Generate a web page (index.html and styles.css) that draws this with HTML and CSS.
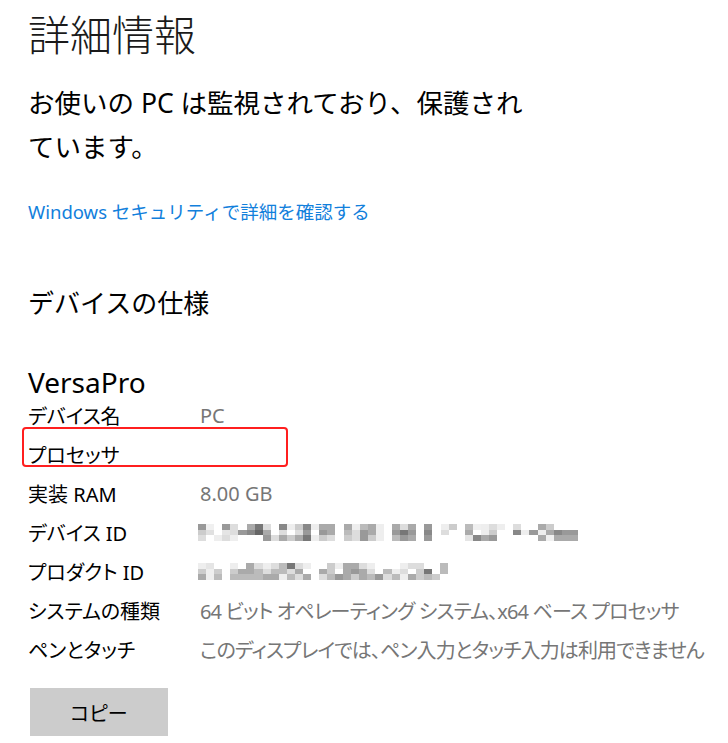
FILE: index.html
```html
<!DOCTYPE html>
<html lang="ja">
<head>
<meta charset="utf-8">
<title>詳細情報</title>
<link rel="stylesheet" href="styles.css">
</head>
<body>
<main class="page">
  <h1 class="title">詳細情報</h1>
  <p class="status">お使いの PC は監視されており、保護され<br>ています。</p>
  <a class="link" href="#">Windows セキュリティで詳細を確認する</a>

  <h2 class="section">デバイスの仕様</h2>

  <div class="model">VersaPro</div>
  <div class="specs">
    <div class="row"><span class="label">デバイス名</span><span class="value">PC</span></div>
    <div class="row marked"><span class="label">プロセッサ</span><span class="value"></span><span class="mark"></span></div>
    <div class="row"><span class="label">実装 RAM</span><span class="value">8.00 GB</span></div>
    <div class="row"><span class="label">デバイス ID</span>
      <svg class="blur blur-id" viewBox="0 0 47 3" preserveAspectRatio="none" aria-label="非表示の ID">
        <rect x="0" y="0" width="1" height="1" fill="#999"/><rect x="1" y="0" width="1" height="1" fill="#f0f0f0"/><rect x="3" y="0" width="1" height="1" fill="#999"/><rect x="4" y="0" width="1" height="1" fill="#ddd"/><rect x="6" y="0" width="1" height="1" fill="#aaa"/><rect x="7" y="0" width="1" height="1" fill="#777"/><rect x="8" y="0" width="1" height="1" fill="#ddd"/><rect x="10" y="0" width="1" height="1" fill="#888"/><rect x="11" y="0" width="1" height="1" fill="#eee"/><rect x="12" y="0" width="1" height="1" fill="#ccc"/><rect x="13" y="0" width="1" height="1" fill="#888"/><rect x="14" y="0" width="1" height="1" fill="#eee"/><rect x="15" y="0" width="1" height="1" fill="#aaa"/><rect x="16" y="0" width="1" height="1" fill="#aaa"/><rect x="18" y="0" width="1" height="1" fill="#aaa"/><rect x="19" y="0" width="1" height="1" fill="#eee"/><rect x="20" y="0" width="1" height="1" fill="#bbb"/><rect x="21" y="0" width="1" height="1" fill="#aaa"/><rect x="22" y="0" width="1" height="1" fill="#eee"/><rect x="24" y="0" width="1" height="1" fill="#aaa"/><rect x="25" y="0" width="1" height="1" fill="#ddd"/><rect x="26" y="0" width="1" height="1" fill="#aaa"/><rect x="28" y="0" width="1" height="1" fill="#999"/><rect x="30" y="0" width="1" height="1" fill="#eee"/><rect x="31" y="0" width="1" height="1" fill="#ccc"/><rect x="33" y="0" width="1" height="1" fill="#bbb"/><rect x="34" y="0" width="1" height="1" fill="#f0f0f0"/><rect x="35" y="0" width="1" height="1" fill="#eee"/><rect x="36" y="0" width="1" height="1" fill="#ddd"/><rect x="37" y="0" width="1" height="1" fill="#eee"/><rect x="39" y="0" width="1" height="1" fill="#ddd"/><rect x="42" y="0" width="1" height="1" fill="#aaa"/><rect x="43" y="0" width="1" height="1" fill="#ccc"/>
        <rect x="0" y="1" width="1" height="1" fill="#ccc"/><rect x="1" y="1" width="1" height="1" fill="#e0e0e0"/><rect x="3" y="1" width="1" height="1" fill="#e5e5e5"/><rect x="4" y="1" width="1" height="1" fill="#ddd"/><rect x="5" y="1" width="1" height="1" fill="#999"/><rect x="6" y="1" width="1" height="1" fill="#888"/><rect x="7" y="1" width="1" height="1" fill="#666"/><rect x="8" y="1" width="1" height="1" fill="#aaa"/><rect x="10" y="1" width="1" height="1" fill="#ddd"/><rect x="12" y="1" width="1" height="1" fill="#ddd"/><rect x="13" y="1" width="1" height="1" fill="#999"/><rect x="15" y="1" width="1" height="1" fill="#999"/><rect x="16" y="1" width="1" height="1" fill="#aaa"/><rect x="18" y="1" width="1" height="1" fill="#bbb"/><rect x="19" y="1" width="1" height="1" fill="#ddd"/><rect x="20" y="1" width="1" height="1" fill="#999"/><rect x="21" y="1" width="1" height="1" fill="#aaa"/><rect x="22" y="1" width="1" height="1" fill="#eee"/><rect x="24" y="1" width="1" height="1" fill="#999"/><rect x="25" y="1" width="1" height="1" fill="#777"/><rect x="26" y="1" width="1" height="1" fill="#999"/><rect x="28" y="1" width="1" height="1" fill="#888"/><rect x="30" y="1" width="1" height="1" fill="#ddd"/><rect x="33" y="1" width="1" height="1" fill="#aaa"/><rect x="35" y="1" width="1" height="1" fill="#eee"/><rect x="36" y="1" width="1" height="1" fill="#ccc"/><rect x="39" y="1" width="1" height="1" fill="#888"/><rect x="40" y="1" width="1" height="1" fill="#eee"/><rect x="41" y="1" width="1" height="1" fill="#999"/><rect x="42" y="1" width="1" height="1" fill="#eee"/><rect x="43" y="1" width="1" height="1" fill="#aaa"/><rect x="44" y="1" width="1" height="1" fill="#888"/><rect x="45" y="1" width="1" height="1" fill="#999"/><rect x="46" y="1" width="1" height="1" fill="#999"/>
        <rect x="0" y="2" width="1" height="1" fill="#ddd"/><rect x="2" y="2" width="1" height="1" fill="#eee"/><rect x="3" y="2" width="1" height="1" fill="#ddd"/><rect x="4" y="2" width="1" height="1" fill="#eee"/><rect x="8" y="2" width="1" height="1" fill="#999"/><rect x="9" y="2" width="1" height="1" fill="#ddd"/><rect x="10" y="2" width="1" height="1" fill="#aaa"/><rect x="11" y="2" width="1" height="1" fill="#ccc"/><rect x="12" y="2" width="1" height="1" fill="#aaa"/><rect x="13" y="2" width="1" height="1" fill="#777"/><rect x="14" y="2" width="1" height="1" fill="#eee"/><rect x="15" y="2" width="1" height="1" fill="#ccc"/><rect x="16" y="2" width="1" height="1" fill="#ddd"/><rect x="18" y="2" width="1" height="1" fill="#ccc"/><rect x="19" y="2" width="1" height="1" fill="#ddd"/><rect x="20" y="2" width="1" height="1" fill="#999"/><rect x="21" y="2" width="1" height="1" fill="#ccc"/><rect x="22" y="2" width="1" height="1" fill="#eee"/><rect x="24" y="2" width="1" height="1" fill="#bbb"/><rect x="25" y="2" width="1" height="1" fill="#999"/><rect x="26" y="2" width="1" height="1" fill="#aaa"/><rect x="28" y="2" width="1" height="1" fill="#999"/><rect x="33" y="2" width="1" height="1" fill="#e5e5e5"/><rect x="34" y="2" width="1" height="1" fill="#888"/><rect x="35" y="2" width="1" height="1" fill="#aaa"/><rect x="36" y="2" width="1" height="1" fill="#999"/><rect x="42" y="2" width="1" height="1" fill="#aaa"/><rect x="43" y="2" width="1" height="1" fill="#f0f0f0"/><rect x="44" y="2" width="1" height="1" fill="#aaa"/><rect x="45" y="2" width="1" height="1" fill="#aaa"/><rect x="46" y="2" width="1" height="1" fill="#aaa"/>
      </svg>
    </div>
    <div class="row"><span class="label">プロダクト ID</span>
      <svg class="blur blur-product" viewBox="0 0 32 3" preserveAspectRatio="none" aria-label="非表示の ID">
        <rect x="0" y="0" width="1" height="1" fill="#eee"/><rect x="1" y="0" width="1" height="1" fill="#e5e5e5"/><rect x="4" y="0" width="1" height="1" fill="#eee"/><rect x="6" y="0" width="1" height="1" fill="#aaa"/><rect x="7" y="0" width="1" height="1" fill="#ddd"/><rect x="8" y="0" width="1" height="1" fill="#eee"/><rect x="9" y="0" width="1" height="1" fill="#ddd"/><rect x="10" y="0" width="1" height="1" fill="#bbb"/><rect x="11" y="0" width="1" height="1" fill="#777"/><rect x="12" y="0" width="1" height="1" fill="#ddd"/><rect x="13" y="0" width="1" height="1" fill="#eee"/><rect x="16" y="0" width="1" height="1" fill="#ccc"/><rect x="17" y="0" width="1" height="1" fill="#eee"/><rect x="18" y="0" width="1" height="1" fill="#aaa"/><rect x="19" y="0" width="1" height="1" fill="#aaa"/><rect x="20" y="0" width="1" height="1" fill="#ddd"/><rect x="21" y="0" width="1" height="1" fill="#eee"/><rect x="25" y="0" width="1" height="1" fill="#eee"/><rect x="26" y="0" width="1" height="1" fill="#ddd"/><rect x="27" y="0" width="1" height="1" fill="#ddd"/><rect x="30" y="0" width="1" height="1" fill="#bbb"/>
        <rect x="0" y="1" width="1" height="1" fill="#ccc"/><rect x="1" y="1" width="1" height="1" fill="#eee"/><rect x="2" y="1" width="1" height="1" fill="#ccc"/><rect x="4" y="1" width="1" height="1" fill="#ccc"/><rect x="5" y="1" width="1" height="1" fill="#aaa"/><rect x="6" y="1" width="1" height="1" fill="#aaa"/><rect x="7" y="1" width="1" height="1" fill="#bbb"/><rect x="8" y="1" width="1" height="1" fill="#ddd"/><rect x="9" y="1" width="1" height="1" fill="#bbb"/><rect x="10" y="1" width="1" height="1" fill="#bbb"/><rect x="11" y="1" width="1" height="1" fill="#ddd"/><rect x="12" y="1" width="1" height="1" fill="#aaa"/><rect x="15" y="1" width="1" height="1" fill="#aaa"/><rect x="16" y="1" width="1" height="1" fill="#ccc"/><rect x="18" y="1" width="1" height="1" fill="#aaa"/><rect x="19" y="1" width="1" height="1" fill="#999"/><rect x="20" y="1" width="1" height="1" fill="#aaa"/><rect x="21" y="1" width="1" height="1" fill="#ddd"/><rect x="23" y="1" width="1" height="1" fill="#bbb"/><rect x="24" y="1" width="1" height="1" fill="#eee"/><rect x="25" y="1" width="1" height="1" fill="#ddd"/><rect x="27" y="1" width="1" height="1" fill="#ccc"/><rect x="28" y="1" width="1" height="1" fill="#777"/><rect x="30" y="1" width="1" height="1" fill="#bbb"/>
        <rect x="0" y="2" width="1" height="1" fill="#aaa"/><rect x="1" y="2" width="1" height="1" fill="#eee"/><rect x="2" y="2" width="1" height="1" fill="#bbb"/><rect x="4" y="2" width="1" height="1" fill="#bbb"/><rect x="5" y="2" width="1" height="1" fill="#bbb"/><rect x="6" y="2" width="1" height="1" fill="#bbb"/><rect x="7" y="2" width="1" height="1" fill="#bbb"/><rect x="8" y="2" width="1" height="1" fill="#aaa"/><rect x="9" y="2" width="1" height="1" fill="#aaa"/><rect x="10" y="2" width="1" height="1" fill="#eee"/><rect x="11" y="2" width="1" height="1" fill="#bbb"/><rect x="12" y="2" width="1" height="1" fill="#ddd"/><rect x="13" y="2" width="1" height="1" fill="#aaa"/><rect x="15" y="2" width="1" height="1" fill="#ddd"/><rect x="16" y="2" width="1" height="1" fill="#bbb"/><rect x="17" y="2" width="1" height="1" fill="#999"/><rect x="18" y="2" width="1" height="1" fill="#aaa"/><rect x="19" y="2" width="1" height="1" fill="#ccc"/><rect x="20" y="2" width="1" height="1" fill="#aaa"/><rect x="21" y="2" width="1" height="1" fill="#bbb"/><rect x="22" y="2" width="1" height="1" fill="#999"/><rect x="23" y="2" width="1" height="1" fill="#ddd"/><rect x="24" y="2" width="1" height="1" fill="#bbb"/><rect x="25" y="2" width="1" height="1" fill="#eee"/><rect x="26" y="2" width="1" height="1" fill="#aaa"/><rect x="27" y="2" width="1" height="1" fill="#ccc"/><rect x="28" y="2" width="1" height="1" fill="#bbb"/><rect x="29" y="2" width="1" height="1" fill="#ccc"/>
      </svg>
    </div>
    <div class="row"><span class="label">システムの種類</span><span class="value tight">64 ビット オペレーティング システム、x64 ベース プロセッサ</span></div>
    <div class="row"><span class="label">ペンとタッチ</span><span class="value tight">このディスプレイでは、ペン入力とタッチ入力は利用できません</span></div>
  </div>
  <button class="copy" type="button">コピー</button>
</main>
</body>
</html>
```

FILE: styles.css
```css
html, body {
  margin: 0;
  padding: 0;
  background: #ffffff;
}

body {
  font-family: "Noto Sans", "Noto Sans CJK JP", sans-serif;
  color: #000000;
}

.page {
  display: flex;
  flex-direction: column;
  align-items: flex-start;
  padding: 9px 0 0 28px;
}

.title {
  margin: 0;
  font-size: 42px;
  font-weight: 300;
  line-height: 52px;
  color: #1a1a1a;
}

.status {
  margin: 20px 0 0;
  font-size: 26.5px;
  font-weight: 400;
  line-height: 44px;
  color: #000000;
}

.link {
  margin-top: 30px;
  font-size: 18.5px;
  line-height: 26px;
  color: #1280dc;
  text-decoration: none;
}

.section {
  margin: 60px 0 0;
  font-size: 26px;
  font-weight: 400;
  line-height: 36px;
  color: #000000;
}

.model {
  margin-top: 46px;
  font-size: 28px;
  line-height: 30px;
  color: #000000;
}

.specs {
  display: flex;
  flex-direction: column;
  margin-top: -1px;
  font-feature-settings: "palt";
}

.row {
  position: relative;
  display: flex;
  align-items: center;
  height: 39px;
  font-size: 20px;
}

.label {
  width: 172px;
  flex: none;
  color: #000000;
}

.value {
  color: #767676;
  white-space: nowrap;
}

.tight {
  letter-spacing: -0.85px;
}

.mark {
  position: absolute;
  left: -6px;
  top: -8px;
  width: 262px;
  height: 36px;
  border: 2.5px solid #ff1f1f;
  border-radius: 4px;
}

.blur {
  display: block;
  margin-left: -2px;
  height: 17px;
  shape-rendering: crispEdges;
  filter: blur(0.4px);
}

.blur-id {
  width: 380px;
}

.blur-product {
  width: 258px;
}

.copy {
  margin: 19px 0 0 2px;
  width: 138px;
  height: 48px;
  border: none;
  background: #cccccc;
  font-family: "Noto Sans CJK JP", sans-serif;
  font-feature-settings: "palt";
  font-size: 20px;
  color: #000000;
  padding: 0;
}
```
